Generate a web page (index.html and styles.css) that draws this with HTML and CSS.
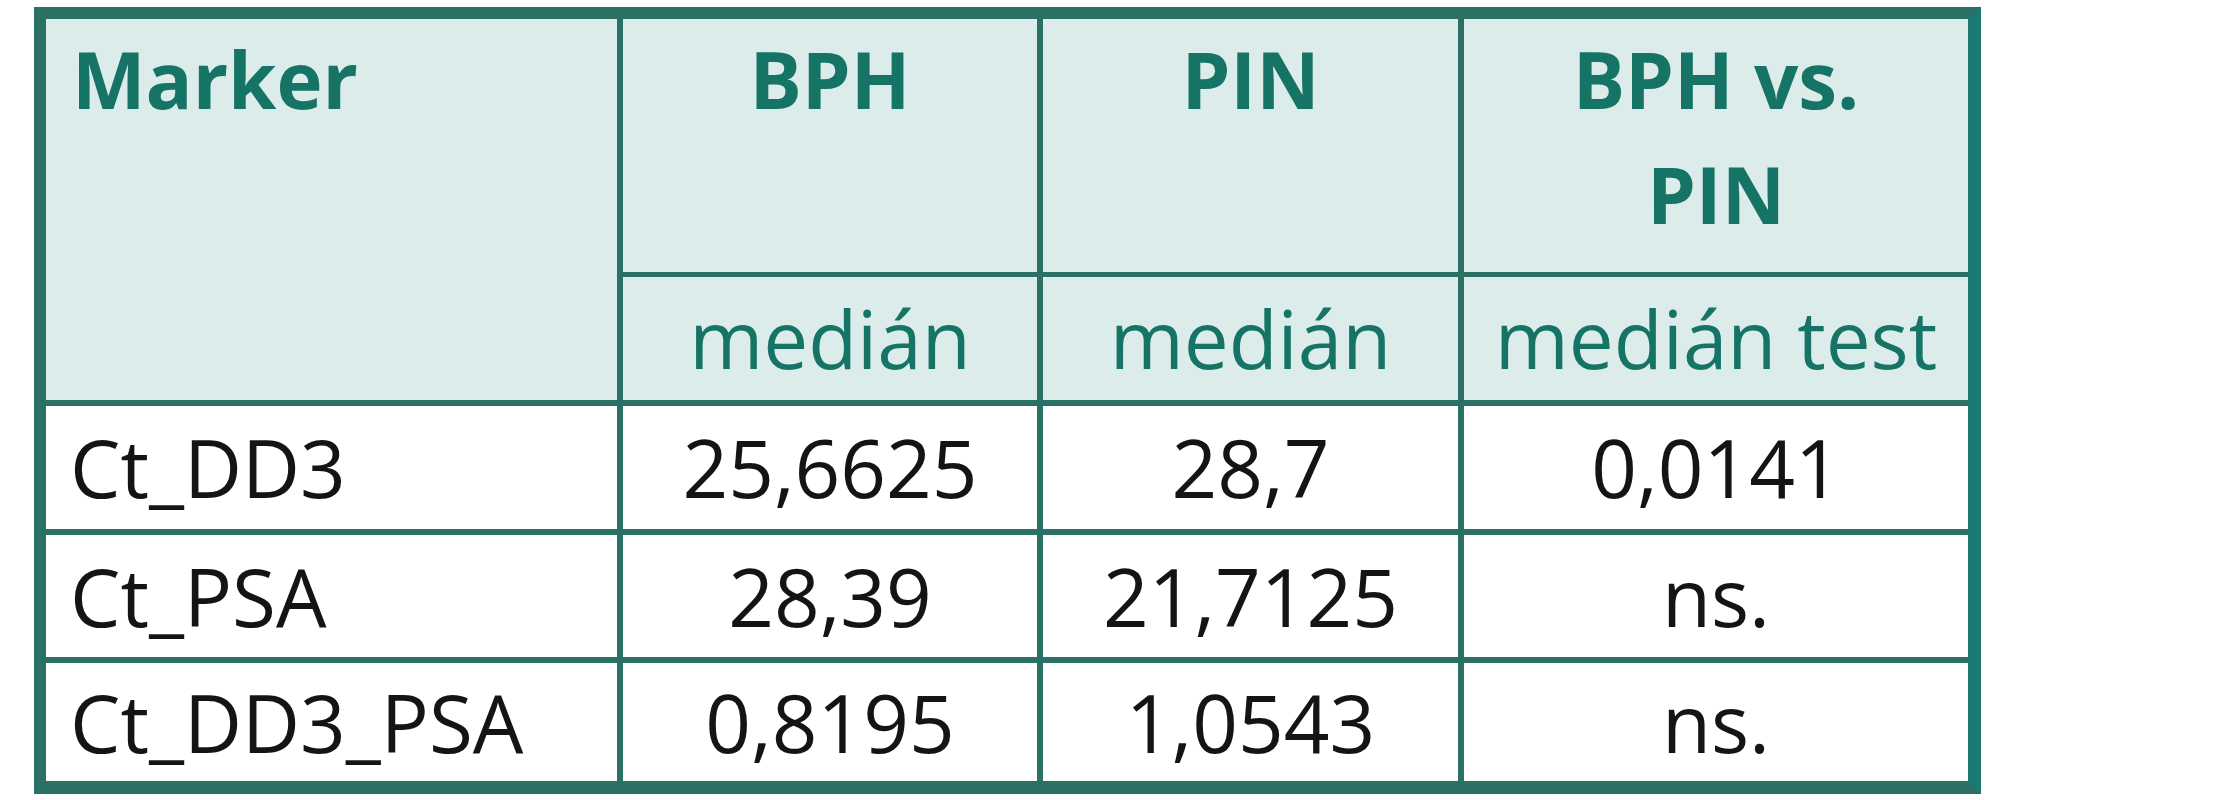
FILE: index.html
```html
<!DOCTYPE html>
<html lang="cs">
<head>
<meta charset="utf-8">
<title>Marker table</title>
<link rel="stylesheet" href="styles.css">
</head>
<body>
<div class="table">
  <div class="cell head marker">Marker</div>
  <div class="cell head group">BPH</div>
  <div class="cell head group">PIN</div>
  <div class="cell head group last">BPH vs.<br>PIN</div>

  <div class="cell sub">medián</div>
  <div class="cell sub">medián</div>
  <div class="cell sub last">medián test</div>

  <div class="cell name">Ct_DD3</div>
  <div class="cell num">25,6625</div>
  <div class="cell num">28,7</div>
  <div class="cell num last">0,0141</div>

  <div class="cell name">Ct_PSA</div>
  <div class="cell num">28,39</div>
  <div class="cell num">21,7125</div>
  <div class="cell num last">ns.</div>

  <div class="cell name bottom">Ct_DD3_PSA</div>
  <div class="cell num bottom">0,8195</div>
  <div class="cell num bottom">1,0543</div>
  <div class="cell num bottom last">ns.</div>
</div>
</body>
</html>
```

FILE: styles.css
```css
html, body {
  margin: 0;
  padding: 0;
  background: #ffffff;
}

body {
  padding: 7px 0 0 34px;
  font-family: "Open Sans", "Noto Sans", sans-serif;
}

.table {
  display: grid;
  grid-template-columns: 577px 420px 421px 504px;
  grid-template-rows: 258px 129px 129px 128px 118px;
  width: max-content;
  border: 12px solid #2b7064;
  border-right: 13px solid #1b7a74;
  border-bottom-width: 13px;
  background: #ffffff;
}

.cell {
  box-sizing: border-box;
  border-right: 6px solid #2b7064;
  border-bottom: 6px solid #2b7064;
  color: #141414;
  font-size: 80px;
  line-height: 1.362;
}

.cell.last {
  border-right: none;
}

.cell.bottom {
  border-bottom: none;
}

.head {
  background: #dcecea;
  color: #167466;
  font-weight: 700;
  font-size: 78px;
  line-height: 115px;
  padding-top: 3px;
  text-align: center;
}

.head.marker {
  grid-row: span 2;
  text-align: left;
  padding-left: 26px;
}

.head.group {
  border-bottom-width: 5px;
}

.sub {
  background: #dcecea;
  color: #167466;
  display: flex;
  align-items: center;
  justify-content: center;
}

.name {
  display: flex;
  align-items: center;
  padding-left: 24px;
}

.num {
  display: flex;
  align-items: center;
  justify-content: center;
}
```
